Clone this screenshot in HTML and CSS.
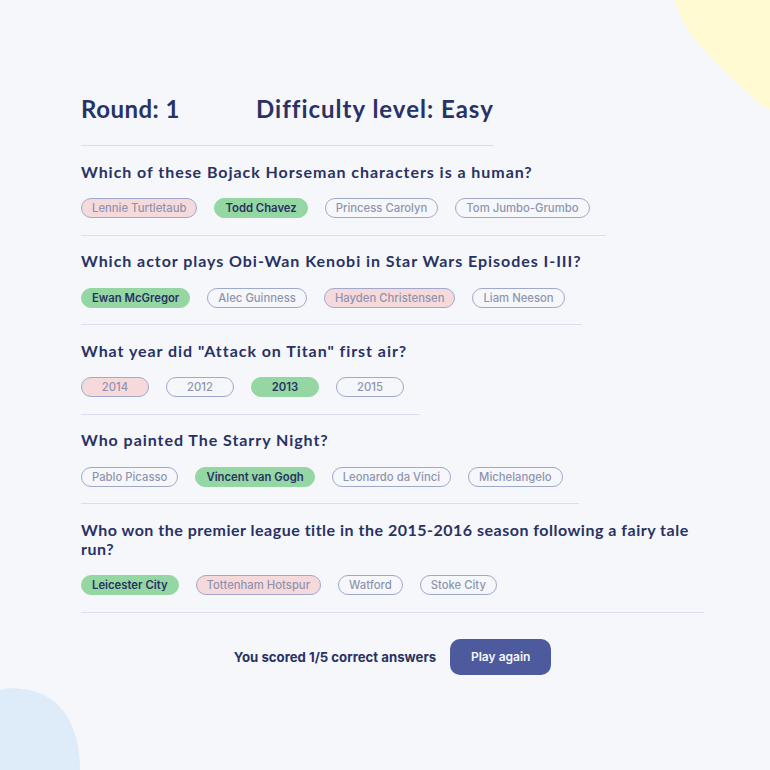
FILE: index.html
```html
<!DOCTYPE html>
<html>
<head>
<meta charset="utf-8">
<link rel="stylesheet" href="styles.css">
</head>
<body>
<svg class="blob blob-yellow" width="96" height="110" viewBox="0 0 96 110"><path d="M1 0 C 8 30, 30 50, 55 75 C 70 90, 82 102, 96 110 L96 0 Z" fill="#FFFAD1"/></svg>
<svg class="blob blob-blue" width="82" height="82" viewBox="0 0 82 82"><path d="M0 2 C 6 0, 14 0, 22 1 C 55 4, 80 30, 80 82 L0 82 Z" fill="#DEEBF8"/></svg>
<main class="quiz">
  <header class="quiz-head">
    <h1 class="head-item">Round: 1</h1>
    <h1 class="head-item">Difficulty level: Easy</h1>
  </header>
  <section class="question">
    <h2 class="q-text">Which of these Bojack Horseman characters is a human?</h2>
    <div class="answers">
      <span class="ans wrong">Lennie Turtletaub</span>
      <span class="ans correct">Todd Chavez</span>
      <span class="ans">Princess Carolyn</span>
      <span class="ans">Tom Jumbo-Grumbo</span>
    </div>
  </section>
  <section class="question">
    <h2 class="q-text">Which actor plays Obi-Wan Kenobi in Star Wars Episodes I-III?</h2>
    <div class="answers">
      <span class="ans correct">Ewan McGregor</span>
      <span class="ans">Alec Guinness</span>
      <span class="ans wrong">Hayden Christensen</span>
      <span class="ans">Liam Neeson</span>
    </div>
  </section>
  <section class="question">
    <h2 class="q-text">What year did "Attack on Titan" first air?</h2>
    <div class="answers">
      <span class="ans wrong w-year">2014</span>
      <span class="ans w-year">2012</span>
      <span class="ans correct w-year">2013</span>
      <span class="ans w-year">2015</span>
    </div>
  </section>
  <section class="question">
    <h2 class="q-text">Who painted The Starry Night?</h2>
    <div class="answers">
      <span class="ans">Pablo Picasso</span>
      <span class="ans correct">Vincent van Gogh</span>
      <span class="ans">Leonardo da Vinci</span>
      <span class="ans">Michelangelo</span>
    </div>
  </section>
  <section class="question">
    <h2 class="q-text q-long">Who won the premier league title in the 2015-2016 season following a fairy tale run?</h2>
    <div class="answers">
      <span class="ans correct">Leicester City</span>
      <span class="ans wrong">Tottenham Hotspur</span>
      <span class="ans">Watford</span>
      <span class="ans">Stoke City</span>
    </div>
  </section>
  <footer class="score">
    <p class="score-text">You scored 1/5 correct answers</p>
    <button class="btn">Play again</button>
  </footer>
</main>
</body>
</html>
```
FILE: styles.css
```css
* { box-sizing: border-box; }
html, body {
  margin: 0;
  padding: 0;
  background: #F5F7FB;
  width: 770px;
  height: 770px;
  overflow: hidden;
}
body {
  position: relative;
  font-family: "Lato", "Noto Sans", sans-serif;
  color: #293264;
}
.blob { position: absolute; }
.blob-yellow { top: 0; right: 0; }
.blob-blue { left: 0; bottom: 0; }

.quiz {
  position: relative;
  width: 623px;
  margin: 0 0 0 81px;
  padding-top: 92px;
  display: flex;
  flex-direction: column;
  align-items: flex-start;
}
.quiz-head {
  display: flex;
  gap: 76px;
  padding-bottom: 20px;
  border-bottom: 1px solid #DBDEF0;
}
.head-item {
  margin: 0;
  font-size: 24px;
  line-height: 33px;
  font-weight: 700;
  letter-spacing: 1px;
}
.head-item:first-child { letter-spacing: 0.5px; }
.question {
  padding: 15.5px 0 16.5px;
  border-bottom: 1px solid #DBDEF0;
  max-width: 623px;
}
.q-text {
  margin: 0 0 17.5px;
  font-size: 16px;
  line-height: 19px;
  font-weight: 700;
  letter-spacing: 0.95px;
}
.q-text.q-long {
  margin-right: -12px;
  letter-spacing: 0.5px;
}
.answers {
  display: flex;
  gap: 17px;
  padding-right: 16px;
}
.ans {
  display: inline-block;
  height: 20px;
  line-height: 18px;
  padding: 0 10px;
  border: 1px solid #4D5B9E;
  border-radius: 10px;
  font-family: "Inter", sans-serif;
  font-size: 11.3px;
  font-weight: 500;
  color: #293264;
  opacity: 0.5;
  white-space: nowrap;
}
.ans.w-year { min-width: 68px; text-align: center; }
.ans.correct {
  background: #94D7A2;
  border-color: #94D7A2;
  opacity: 1;
  font-weight: 600;
}
.ans.wrong {
  background: #F8BCBC;
}
.score {
  align-self: stretch;
  display: flex;
  justify-content: center;
  align-items: center;
  gap: 14px;
  margin-top: 26px;
}
.score-text {
  margin: 0;
  font-family: "Inter", sans-serif;
  font-weight: 700;
  font-size: 13.2px;
  color: #293264;
}
.btn {
  width: 101px;
  height: 36px;
  border: none;
  border-radius: 10px;
  background: #4D5B9E;
  color: #F5F7FB;
  font-family: "Inter", sans-serif;
  font-weight: 600;
  font-size: 12px;
}
```
